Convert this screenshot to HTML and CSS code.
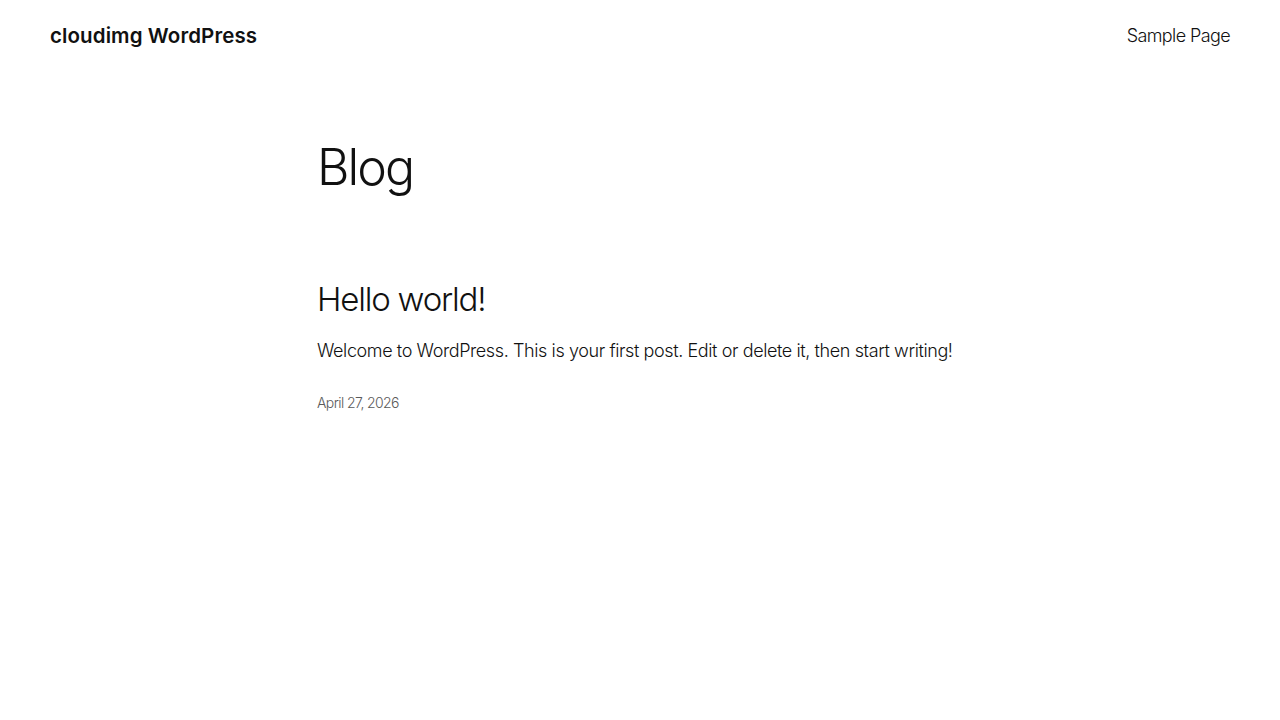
FILE: index.html
```html
<!DOCTYPE html>
<html lang="en">
<head>
<meta charset="utf-8">
<title>Blog – cloudimg WordPress</title>
<link rel="stylesheet" href="styles.css">
</head>
<body>
<header class="site-header">
  <a class="site-title" href="#">cloudimg WordPress</a>
  <nav class="site-nav"><a href="#">Sample Page</a></nav>
</header>
<main class="content">
  <h1 class="page-title">Blog</h1>
  <article class="post">
    <h2 class="post-title"><a href="#">Hello world!</a></h2>
    <p class="post-excerpt">Welcome to WordPress. This is your first post. Edit or delete it, then start writing!</p>
    <div class="post-date">April 27, 2026</div>
  </article>
</main>
</body>
</html>
```

FILE: styles.css
```css
* { box-sizing: border-box; }
html, body { margin: 0; padding: 0; background: #fff; }
body {
  font-family: Inter, "Noto Sans", sans-serif;
  color: #111;
  -webkit-font-smoothing: antialiased;
}
a { color: inherit; text-decoration: none; }

.site-header {
  display: flex;
  justify-content: space-between;
  align-items: center;
  height: 70px;
  padding: 0 50px;
}
.site-title {
  font-size: 20.5px;
  font-weight: 600;
  letter-spacing: 0.1px;
}
.site-nav a {
  font-size: 18px;
  font-weight: 300;
  letter-spacing: -0.6px;
}

.content {
  width: 646px;
  margin: 0 auto;
  padding-top: 67px;
}
.page-title {
  margin: 0;
  font-size: 50px;
  font-weight: 300;
  letter-spacing: -1.9px;
  line-height: 1.2;
}
.post { padding-top: 83px; }
.post-title {
  margin: 0;
  font-size: 33px;
  font-weight: 300;
  letter-spacing: -1.2px;
  line-height: 1.2;
}
.post-excerpt {
  margin: 17px 0 0;
  font-size: 18px;
  font-weight: 300;
  letter-spacing: -0.4px;
  line-height: 1.5;
}
.post-date {
  margin-top: 30px;
  font-size: 14px;
  font-weight: 300;
  color: #5a5a5a;
  letter-spacing: -0.6px;
}
```
